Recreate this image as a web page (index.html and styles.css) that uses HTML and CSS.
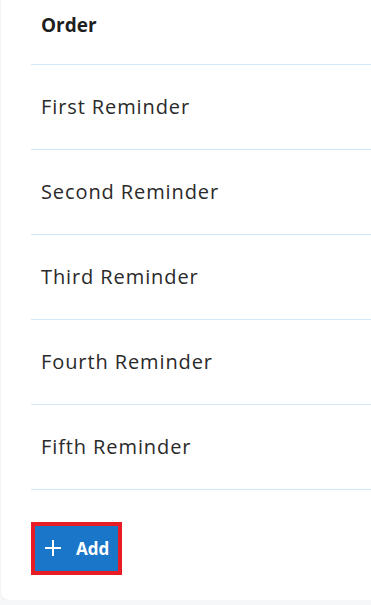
FILE: index.html
```html
<!DOCTYPE html>
<html lang="en">

<head>
  <meta charset="UTF-8" />
  <meta name="viewport" content="width=device-width, initial-scale=1.0" />
  <title>Reminders</title>
  <link rel="stylesheet" href="styles.css">
</head>

<body>
  <div class="card">
    <table class="reminders">
      <thead>
        <tr>
          <th>Order</th>
        </tr>
      </thead>
      <tbody>
        <tr><td>First Reminder</td></tr>
        <tr><td>Second Reminder</td></tr>
        <tr><td>Third Reminder</td></tr>
        <tr><td>Fourth Reminder</td></tr>
        <tr><td>Fifth Reminder</td></tr>
      </tbody>
    </table>
    <div class="actions">
      <button class="btn-add" type="button">
        <svg width="18" height="18" viewBox="0 0 18 18" aria-hidden="true">
          <path d="M9 1v16M1 9h16" stroke="#fff" stroke-width="2" fill="none" />
        </svg>
        <span>Add</span>
      </button>
    </div>
  </div>
</body>

</html>
```

FILE: styles.css
```css
* {
  margin: 0;
  padding: 0;
  box-sizing: border-box;
}

html,
body {
  overflow: hidden;
}

body {
  background: #f6f7f9;
  font-family: "Open Sans", "Noto Sans", sans-serif;
  color: #2a2a2a;
}

.card {
  margin-left: 1px;
  padding: 0 0 25px 30px;
  background: #fff;
  border-radius: 0 0 0 8px;
  box-shadow: 0 0 1px rgba(0, 0, 0, 0.12);
}

.reminders {
  width: 100%;
  border-collapse: collapse;
}

.reminders th,
.reminders td {
  text-align: left;
  padding-left: 10px;
  border-bottom: 1px solid #d3e7fa;
}

.reminders th {
  height: 64px;
  font-size: 19px;
  font-weight: 700;
  color: #1f1f1f;
  vertical-align: middle;
  padding-bottom: 14px;
}

.reminders td {
  height: 85px;
  font-size: 20px;
  letter-spacing: 0.9px;
  font-weight: 400;
}

.actions {
  padding-top: 32px;
}

.btn-add {
  display: inline-flex;
  align-items: center;
  gap: 14px;
  height: 53px;
  padding: 0 9px;
  background: #1a76c9;
  color: #fff;
  border: 4px solid #e81c25;
  font-family: inherit;
  font-size: 17px;
  font-weight: 700;
}
```
